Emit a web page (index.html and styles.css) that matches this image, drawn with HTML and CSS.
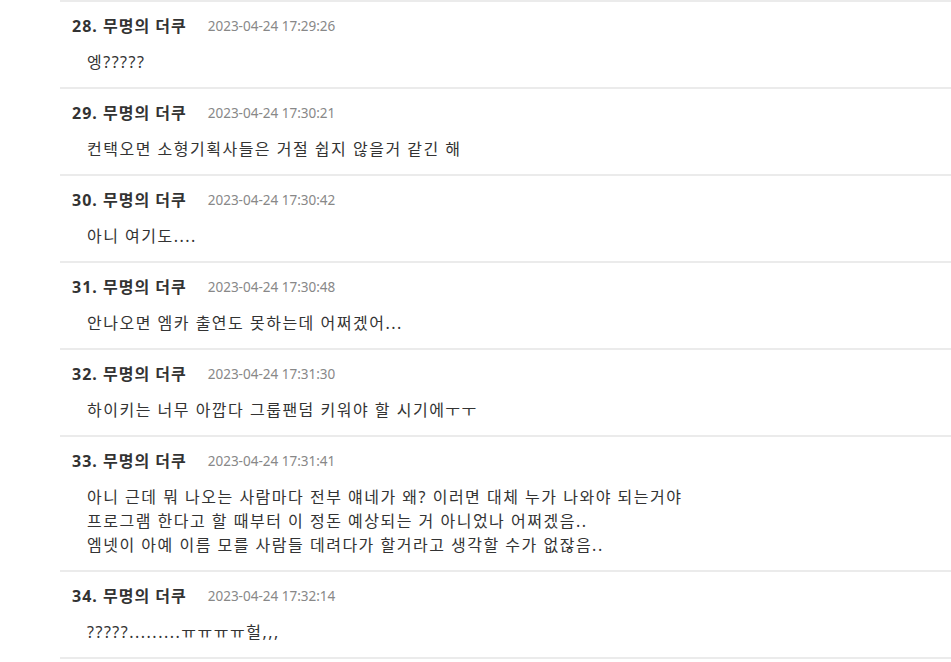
FILE: index.html
```html
<!DOCTYPE html>
<html lang="ko">
<head>
<meta charset="utf-8">
<link rel="stylesheet" href="styles.css">
</head>
<body>
<div class="list">
  <div class="comment">
    <div class="head"><span class="name">28. 무명의 더쿠</span><span class="date">2023-04-24 17:29:26</span></div>
    <div class="text">엥?????</div>
  </div>
  <div class="comment">
    <div class="head"><span class="name">29. 무명의 더쿠</span><span class="date">2023-04-24 17:30:21</span></div>
    <div class="text">컨택오면 소형기획사들은 거절 쉽지 않을거 같긴 해</div>
  </div>
  <div class="comment">
    <div class="head"><span class="name">30. 무명의 더쿠</span><span class="date">2023-04-24 17:30:42</span></div>
    <div class="text">아니 여기도....</div>
  </div>
  <div class="comment">
    <div class="head"><span class="name">31. 무명의 더쿠</span><span class="date">2023-04-24 17:30:48</span></div>
    <div class="text">안나오면 엠카 출연도 못하는데 어쩌겠어...</div>
  </div>
  <div class="comment">
    <div class="head"><span class="name">32. 무명의 더쿠</span><span class="date">2023-04-24 17:31:30</span></div>
    <div class="text">하이키는 너무 아깝다 그룹팬덤 키워야 할 시기에ㅜㅜ</div>
  </div>
  <div class="comment">
    <div class="head"><span class="name">33. 무명의 더쿠</span><span class="date">2023-04-24 17:31:41</span></div>
    <div class="text">아니 근데 뭐 나오는 사람마다 전부 얘네가 왜? 이러면 대체 누가 나와야 되는거야<br>프로그램 한다고 할 때부터 이 정돈 예상되는 거 아니었나 어쩌겠음..<br>엠넷이 아예 이름 모를 사람들 데려다가 할거라고 생각할 수가 없잖음..</div>
  </div>
  <div class="comment">
    <div class="head"><span class="name">34. 무명의 더쿠</span><span class="date">2023-04-24 17:32:14</span></div>
    <div class="text">?????.........ㅠㅠㅠㅠ헐,,,</div>
  </div>
</div>
</body>
</html>
```

FILE: styles.css
```css
html, body {
  margin: 0;
  padding: 0;
  background: #fff;
}
body {
  font-family: "Noto Sans", "Noto Sans CJK KR", sans-serif;
  color: #333;
}
.list {
  margin-left: 60px;
  border-top: 2px solid #ebebeb;
}
.comment {
  padding: 12px 12px 13px;
  border-bottom: 2px solid #ebebeb;
}
.head {
  display: flex;
  align-items: center;
  height: 24px;
  line-height: 24px;
}
.name {
  font-size: 16px;
  font-weight: bold;
  letter-spacing: 1px;
  color: #333;
}
.date {
  margin-left: 21px;
  font-size: 13.5px;
  color: #888;
}
.text {
  margin-top: 12px;
  padding-left: 15px;
  font-size: 16px;
  letter-spacing: 1.5px;
  line-height: 24px;
  color: #333;
}
```
